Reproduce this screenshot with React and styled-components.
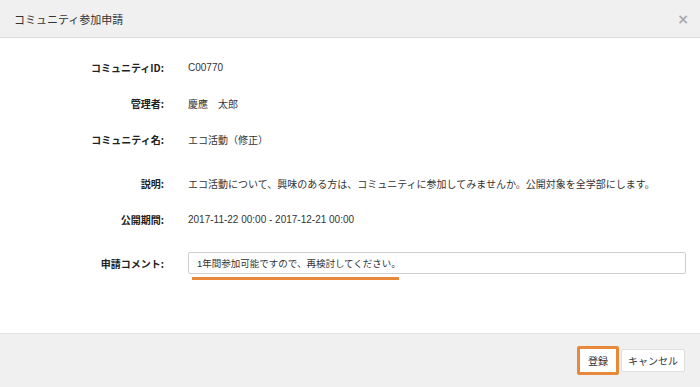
import React from "react";
import styled, { createGlobalStyle } from "styled-components";

const GlobalStyle = createGlobalStyle`
  html, body {
    margin: 0;
    padding: 0;
    background: #fff;
  }
  body {
    font-family: "Liberation Sans", "Noto Sans CJK JP", sans-serif;
    color: #333;
  }
`;

const fields = [
  { label: "コミュニティID:", value: "C00770" },
  { label: "管理者:", value: "慶應　太郎" },
  { label: "コミュニティ名:", value: "エコ活動（修正）" },
  {
    label: "説明:",
    value:
      "エコ活動について、興味のある方は、コミュニティに参加してみませんか。公開対象を全学部にします。",
    spaced: true,
  },
  { label: "公開期間:", value: "2017-11-22 00:00 - 2017-12-21 00:00" },
];

function App() {
  return (
    <>
      <GlobalStyle />
      <Dialog>
        <Header>
          <Title>コミュニティ参加申請</Title>
          <Close type="button" aria-label="close">×</Close>
        </Header>

        <Body>
          {fields.map((f) => (
            <Row key={f.label} spaced={f.spaced}>
              <Label>{f.label}</Label>
              <Value>{f.value}</Value>
            </Row>
          ))}
          <Row spaced>
            <Label>申請コメント:</Label>
            <InputWrap>
              <CommentInput defaultValue="1年間参加可能ですので、再検討してください。" />
              <Underline />
            </InputWrap>
          </Row>
        </Body>

        <Footer>
          <Button type="button" primary>登録</Button>
          <Button type="button">キャンセル</Button>
        </Footer>
      </Dialog>
    </>
  );
}

const Dialog = styled.div`
  width: 700px;
  height: 387px;
  display: flex;
  flex-direction: column;
  background: #fff;
`;

const Header = styled.div`
  height: 37px;
  flex-shrink: 0;
  display: flex;
  align-items: center;
  justify-content: space-between;
  padding: 0 11px 0 14px;
  background: #f0f0f0;
  border-bottom: 1px solid #dcdcdc;
`;

const Title = styled.div`
  font-size: 11px;
  color: #333;
  font-family: "Noto Sans CJK JP", sans-serif;
`;

const Close = styled.button`
  border: none;
  background: none;
  padding: 0;
  font-size: 14px;
  font-weight: bold;
  line-height: 1;
  color: #aaa;
  font-family: "DejaVu Sans", sans-serif;
  cursor: pointer;
`;

const Body = styled.div`
  flex: 1;
  padding-top: 11px;
`;

const Row = styled.div`
  display: flex;
  align-items: center;
  height: 36px;
  margin-top: ${(p) => (p.spaced ? "8px" : "0")};
`;

const Label = styled.div`
  width: 164px;
  flex-shrink: 0;
  text-align: right;
  font-size: 10px;
  font-weight: bold;
  color: #222;
  font-family: "Noto Sans CJK JP", sans-serif;
`;

const Value = styled.div`
  margin-left: 24px;
  font-size: 10px;
  color: #333;
`;

const InputWrap = styled.div`
  position: relative;
  margin-left: 24px;
  width: 498px;
`;

const CommentInput = styled.input`
  box-sizing: border-box;
  width: 100%;
  height: 22px;
  border: 1px solid #cfcfcf;
  border-radius: 2px;
  padding: 0 8px 1px;
  font-size: 9.5px;
  color: #333;
  font-family: "Liberation Sans", "Noto Sans CJK JP", sans-serif;
  outline: none;
`;

const Underline = styled.div`
  position: absolute;
  left: 4px;
  top: 25px;
  width: 207px;
  height: 3px;
  background: #e8883a;
`;

const Footer = styled.div`
  height: 53px;
  flex-shrink: 0;
  display: flex;
  align-items: center;
  justify-content: flex-end;
  gap: 2px;
  padding-right: 15px;
  background: #f0f0f0;
  border-top: 1px solid #e2e2e2;
`;

const Button = styled.button`
  box-sizing: border-box;
  height: ${(p) => (p.primary ? "29px" : "23px")};
  padding: 0 ${(p) => (p.primary ? "8px" : "6px")};
  background: #fff;
  border: ${(p) => (p.primary ? "3px solid #e8883a" : "1px solid #dedede")};
  border-radius: 2px;
  font-size: 10px;
  color: #333;
  font-family: "Noto Sans CJK JP", sans-serif;
  cursor: pointer;
`;

export default App;
